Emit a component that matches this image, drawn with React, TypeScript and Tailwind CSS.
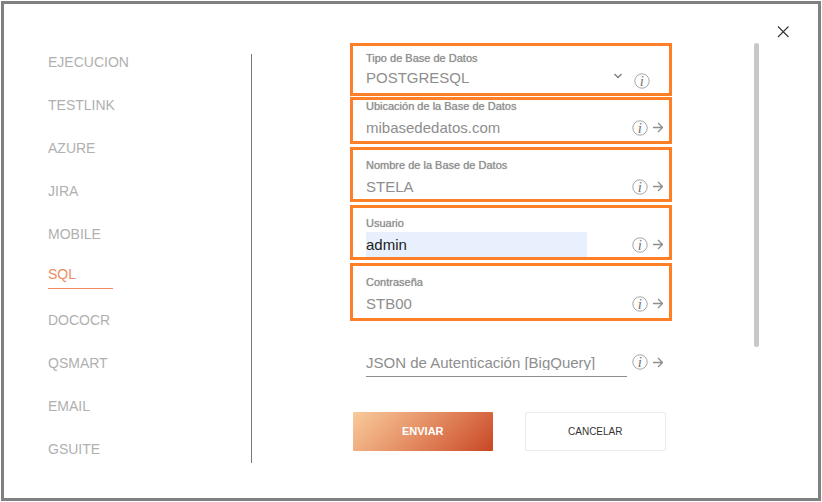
import { useState } from "react";
import clsx from "clsx";

const tabs = [
  "EJECUCION",
  "TESTLINK",
  "AZURE",
  "JIRA",
  "MOBILE",
  "SQL",
  "DOCOCR",
  "QSMART",
  "EMAIL",
  "GSUITE",
];

const fields = [
  { id: "host", label: "Ubicación de la Base de Datos", value: "mibasededatos.com", box: "mt-px pb-px" },
  { id: "name", label: "Nombre de la Base de Datos", value: "STELA", box: "mt-[3px] pt-[9px]" },
  { id: "user", label: "Usuario", value: "admin", box: "mt-[3px] pt-[9px]", filled: true },
  { id: "pass", label: "Contraseña", value: "STB00", box: "mt-[3px] pt-[10px] pb-0.5" },
];

export default function App() {
  const [active, setActive] = useState("SQL");

  return (
    <div className="flex min-h-screen bg-white p-px font-['Liberation_Sans',Arial,sans-serif]">
      <main className="flex flex-1 flex-col border-[3px] border-[#7f8080]">
        <header className="flex h-9 items-end justify-end pr-[27px]">
          <button type="button" aria-label="Cerrar" className="p-0.5 text-[#333]">
            <CloseIcon />
          </button>
        </header>

        <div className="flex flex-1">
          <Tabs active={active} onSelect={setActive} />
          <SqlForm />
          <div className="mt-[3px] mr-[59px] h-[304px] w-[5px] rounded-full bg-[#c8c8c8]" />
        </div>
      </main>
    </div>
  );
}

//* —————————————————————————————————————————————————————————————————————————————————————

const Tabs = ({ active, onSelect }: { active: string; onSelect: (tab: string) => void }) => (
  <div className="flex w-[248px] items-start justify-between pl-11">
    <nav>
      {tabs.map(tab => (
        <div key={tab} className="flex h-[43px] items-center">
          <a
            href={`#${tab.toLowerCase()}`}
            onClick={() => onSelect(tab)}
            className={clsx(
              "text-sm",
              tab === active
                ? "w-[65px] border-b border-[#ec8a60] pb-1 text-[#ec8a60]"
                : "text-[#b0b0b0]",
            )}>
            {tab}
          </a>
        </div>
      ))}
    </nav>
    <div className="mt-[14px] h-[409px] w-px bg-[#777]" />
  </div>
);

//* —————————————————————————————————————————————————————————————————————————————————————

const SqlForm = () => (
  <form className="mt-[3px] mr-[82px] ml-[98px] flex-1" onSubmit={e => e.preventDefault()}>
    <div className="border-[3px] border-[#ff7f27] pt-1.5 pr-[19px] pb-1 pl-[13px]">
      <Label id="type" text="Tipo de Base de Datos" />
      <div className="flex items-end">
        <div className="relative mr-2 flex flex-1 items-center">
          <select
            id="type"
            defaultValue="POSTGRESQL"
            className="h-[22px] w-full appearance-none bg-transparent text-[15px] text-[#8e8e8e] outline-none">
            <option>POSTGRESQL</option>
            <option>MYSQL</option>
            <option>ORACLE</option>
          </select>
          <ChevronIcon />
        </div>
        <InfoIcon />
      </div>
    </div>

    {fields.map(f => (
      <div key={f.id} className={clsx("border-[3px] border-[#ff7f27] pr-1.5 pl-[13px]", f.box)}>
        <Label id={f.id} text={f.label} />
        <div className="flex items-center">
          <input
            id={f.id}
            defaultValue={f.value}
            className={clsx(
              "mr-[45px] h-[25px] min-w-0 flex-1 text-[15px] outline-none",
              f.filled ? "bg-[#e8f0fe] text-[#222]" : "text-[#8e8e8e]",
            )}
          />
          <RowIcons />
        </div>
      </div>
    ))}

    <div className="mt-[33px] flex items-start pr-[9px] pl-4">
      <div className="mr-[5px] min-w-0 flex-1 border-b border-[#8e8e8e] pb-1.5">
        <div className="h-4 overflow-hidden">
          <input
            aria-label="JSON de Autenticación [BigQuery]"
            placeholder="JSON de Autenticación [BigQuery]"
            className="block h-[18px] w-full text-[15px] text-[#8e8e8e] outline-none placeholder:text-[#8e8e8e]"
          />
        </div>
      </div>
      <RowIcons />
    </div>

    <div className="mt-[35px] flex gap-8 pr-1.5 pl-[3px]">
      <button
        type="submit"
        className="h-[39px] flex-1 rounded-[1px] bg-linear-135 from-[#f8cb9c] to-[#c84623] text-[11px] font-bold text-white">
        ENVIAR
      </button>
      <button
        type="button"
        className="h-[39px] flex-1 rounded-xs border border-[#ebebeb] text-[10px] text-[#333]">
        CANCELAR
      </button>
    </div>
  </form>
);

const Label = ({ id, text }: { id: string; text: string }) => (
  <label
    htmlFor={id}
    className="mb-[3px] block text-[11px] leading-3 text-[#8e8e8e] [text-shadow:0_0_1px_#a4a4a4]">
    {text}
  </label>
);

//* —————————————————————————————————————————————————————————————————————————————————————

const RowIcons = () => (
  <div className="flex items-center gap-1">
    <InfoIcon />
    <ArrowIcon />
  </div>
);

const InfoIcon = () => (
  <svg width="16" height="16" viewBox="0 0 16 16" className="shrink-0">
    <circle cx="8" cy="8" r="7.2" fill="none" stroke="#9c9c9c" strokeWidth="0.9" />
    <text
      x="7.8"
      y="12.5"
      textAnchor="middle"
      fill="#777"
      className="font-['Liberation_Serif',serif] text-[15px] italic">
      i
    </text>
  </svg>
);

const ArrowIcon = () => (
  <svg
    width="11"
    height="11"
    viewBox="0 0 11 11"
    fill="none"
    stroke="#8e8e8e"
    strokeWidth="1.3"
    className="shrink-0">
    <path d="M1 5.5H10.5M6 1L10.5 5.5L6 10" />
  </svg>
);

const ChevronIcon = () => (
  <svg
    width="8"
    height="6"
    viewBox="0 0 8 6"
    fill="none"
    stroke="#808080"
    strokeWidth="1.5"
    className="pointer-events-none absolute top-1.5 right-1">
    <path d="M0.5 1L4 4.5L7.5 1" />
  </svg>
);

const CloseIcon = () => (
  <svg
    width="12"
    height="12"
    viewBox="0 0 12 12"
    fill="none"
    stroke="currentColor"
    strokeWidth="1.1">
    <path d="M1 0.5L11.5 11M11.5 0.5L1 11" />
  </svg>
);
